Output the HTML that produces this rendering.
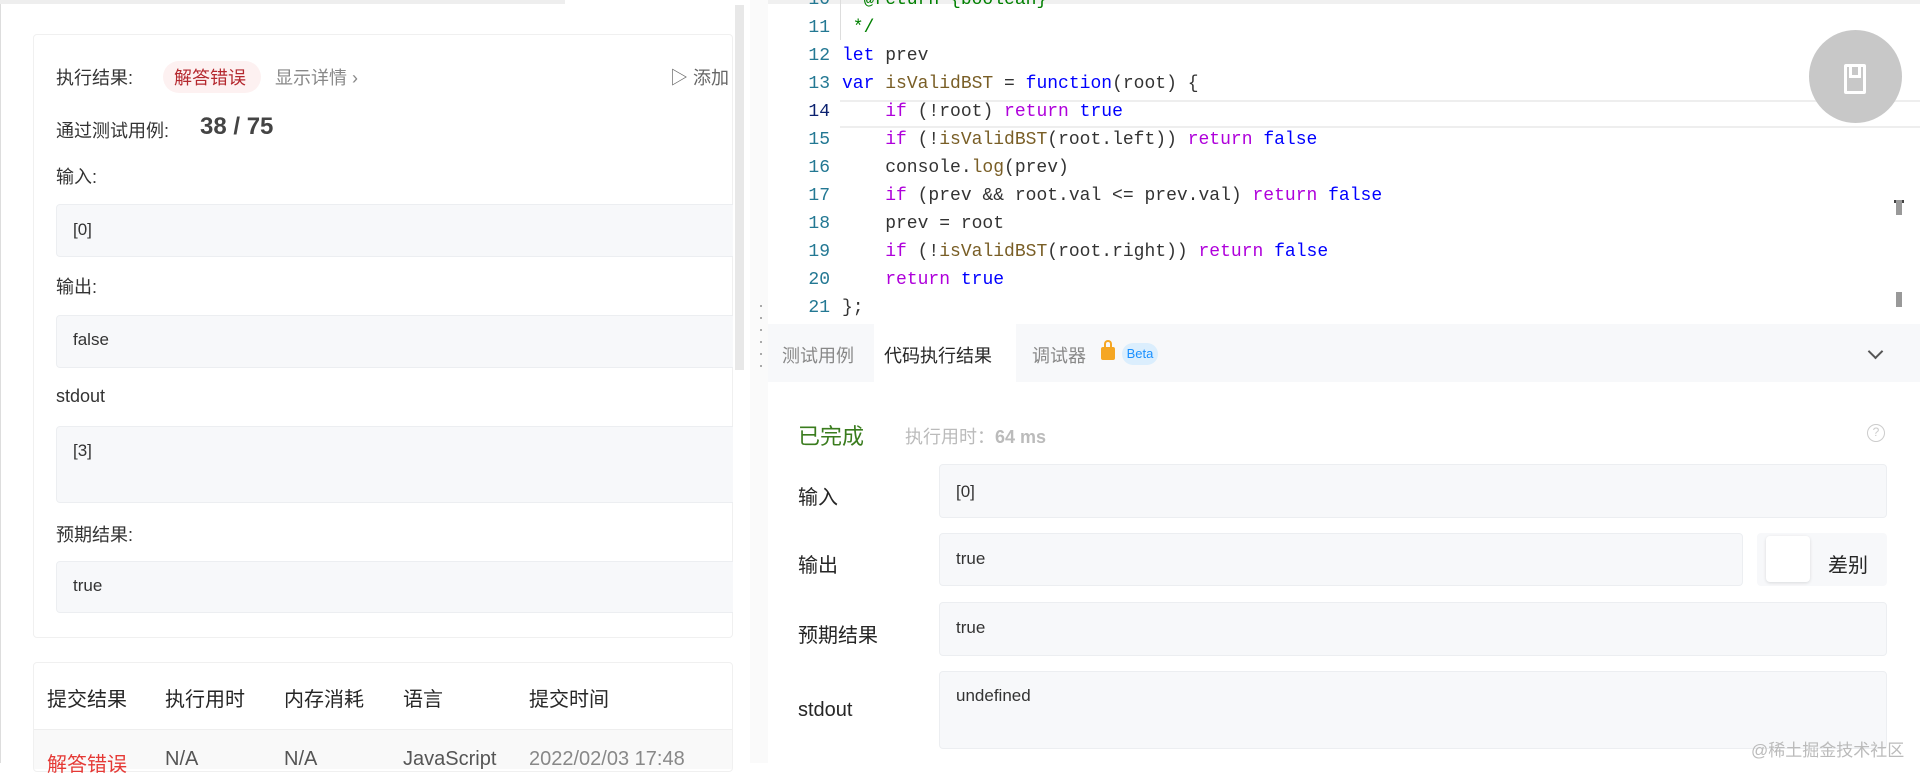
<!DOCTYPE html>
<html><head><meta charset="utf-8"><style>
*{box-sizing:border-box;margin:0;padding:0}
body{width:1920px;height:763px;overflow:hidden;background:#fff;font-family:"Liberation Sans","Noto Sans CJK SC",sans-serif;color:#333;position:relative}
.a{position:absolute;white-space:pre}
.box{position:absolute;background:#f7f8fa;border:1px solid #eceef1;border-radius:4px}
.code{font-family:"Liberation Mono","DejaVu Sans Mono",monospace;font-size:18px;color:#333}
.ln{position:absolute;left:790px;width:40px;text-align:right;color:#237893;font-family:"Liberation Mono",monospace;font-size:18px}
.k{color:#0000ff}.p{color:#af00db}.f{color:#795e26}.c{color:#008000}
</style></head><body>
<!-- left panel -->
<div class="a" style="left:0;top:0;width:1px;height:763px;background:#ddd"></div>
<div class="a" style="left:0;top:0;width:565px;height:4px;background:#eee"></div>
<div class="a" style="left:33px;top:34px;width:700px;height:604px;border:1px solid #f0f0f0;border-radius:4px"></div>
<div class="a" style="left:56px;top:64px;font-size:18px;color:#333">执行结果:</div>
<div class="a" style="left:163px;top:61px;width:98px;height:32px;border-radius:16px;background:#fdf1f1"></div>
<div class="a" style="left:174px;top:64px;font-size:18px;color:#b4282e">解答错误</div>
<div class="a" style="left:275px;top:64px;font-size:18px;color:#888">显示详情 ›</div>
<div class="a" style="left:670px;top:64px;font-size:18px;color:#666">▷ 添加</div>
<div class="a" style="left:56px;top:117px;font-size:18px">通过测试用例:</div>
<div class="a" style="left:200px;top:113px;font-size:24px;font-weight:bold;color:#444">38 / 75</div>
<div class="a" style="left:56px;top:163px;font-size:18px">输入:</div>
<div class="box" style="left:56px;top:204px;width:690px;height:53px"></div>
<div class="a" style="left:73px;top:220px;font-size:17px">[0]</div>
<div class="a" style="left:56px;top:273px;font-size:18px">输出:</div>
<div class="box" style="left:56px;top:315px;width:690px;height:53px"></div>
<div class="a" style="left:73px;top:330px;font-size:17px">false</div>
<div class="a" style="left:56px;top:386px;font-size:18px">stdout</div>
<div class="box" style="left:56px;top:426px;width:690px;height:77px"></div>
<div class="a" style="left:73px;top:441px;font-size:17px">[3]</div>
<div class="a" style="left:56px;top:521px;font-size:18px">预期结果:</div>
<div class="box" style="left:56px;top:561px;width:690px;height:52px"></div>
<div class="a" style="left:73px;top:576px;font-size:17px">true</div>
<div class="a" style="left:33px;top:662px;width:700px;height:110px;border:1px solid #f0f0f0;border-radius:4px"></div>
<div class="a" style="left:34px;top:729px;width:698px;height:40px;background:#f9f9f9;border-top:1px solid #eee"></div>
<div class="a" style="left:47px;top:683px;font-size:20px;color:#262626">提交结果</div>
<div class="a" style="left:165px;top:683px;font-size:20px;color:#262626">执行用时</div>
<div class="a" style="left:284px;top:683px;font-size:20px;color:#262626">内存消耗</div>
<div class="a" style="left:403px;top:683px;font-size:20px;color:#262626">语言</div>
<div class="a" style="left:529px;top:683px;font-size:20px;color:#262626">提交时间</div>
<div class="a" style="left:47px;top:748px;font-size:20px;color:#e53935">解答错误</div>
<div class="a" style="left:165px;top:748px;font-size:20px;color:#555">N/A</div>
<div class="a" style="left:284px;top:748px;font-size:20px;color:#555">N/A</div>
<div class="a" style="left:403px;top:748px;font-size:20px;color:#555">JavaScript</div>
<div class="a" style="left:529px;top:748px;font-size:20px;color:#888">2022/02/03 17:48</div>
<div class="a" style="left:733px;top:0;width:17px;height:763px;background:#fff"></div>
<div class="a" style="left:735px;top:5px;width:9px;height:365px;background:#e8e8e8"></div>
<!-- divider -->
<div class="a" style="left:750px;top:0;width:18px;height:763px;background:#fafafa"></div>
<div class="a" style="left:760px;top:305px;width:2px;height:70px;background:repeating-linear-gradient(#aaa 0 2px,transparent 2px 12px)"></div>
<!-- editor -->
<div class="a" style="left:768px;top:0;width:1152px;height:324px;background:#fff"></div>
<div class="a" style="left:768px;top:0;width:1152px;height:4px;background:#f0f0f0"></div>
<div class="a" style="left:840px;top:100px;width:1080px;height:28px;border-top:2px solid #eee;border-bottom:2px solid #eee"></div>
<div class="a" style="left:840px;top:0;width:1px;height:40px;background:#ddd"></div>
<div class="ln" style="top:-10px">10</div><div class="a code" style="left:842px;top:-10px;color:#008000">  @return {boolean}</div>
<div class="ln" style="top:18px">11</div><div class="a code c" style="left:842px;top:18px"> */</div>
<div class="ln" style="top:46px">12</div><div class="a code" style="left:842px;top:46px"><span class="k">let</span> prev</div>
<div class="ln" style="top:74px">13</div><div class="a code" style="left:842px;top:74px"><span class="k">var</span> <span class="f">isValidBST</span> = <span class="k">function</span>(root) {</div>
<div class="ln" style="top:102px;color:#0b216f">14</div><div class="a code" style="left:842px;top:102px">    <span class="p">if</span> (!root) <span class="p">return</span> <span class="k">true</span></div>
<div class="ln" style="top:130px">15</div><div class="a code" style="left:842px;top:130px">    <span class="p">if</span> (!<span class="f">isValidBST</span>(root.left)) <span class="p">return</span> <span class="k">false</span></div>
<div class="ln" style="top:158px">16</div><div class="a code" style="left:842px;top:158px">    console.<span class="f">log</span>(prev)</div>
<div class="ln" style="top:186px">17</div><div class="a code" style="left:842px;top:186px">    <span class="p">if</span> (prev &amp;&amp; root.val &lt;= prev.val) <span class="p">return</span> <span class="k">false</span></div>
<div class="ln" style="top:214px">18</div><div class="a code" style="left:842px;top:214px">    prev = root</div>
<div class="ln" style="top:242px">19</div><div class="a code" style="left:842px;top:242px">    <span class="p">if</span> (!<span class="f">isValidBST</span>(root.right)) <span class="p">return</span> <span class="k">false</span></div>
<div class="ln" style="top:270px">20</div><div class="a code" style="left:842px;top:270px">    <span class="p">return</span> <span class="k">true</span></div>
<div class="ln" style="top:298px">21</div><div class="a code" style="left:842px;top:298px">};</div>
<div class="a" style="left:1809px;top:30px;width:93px;height:93px;border-radius:50%;background:#c8c8c8"></div>
<div class="a" style="left:1844px;top:64px;width:22px;height:30px;border:3px solid #fff;border-radius:2px"></div>
<div class="a" style="left:1849px;top:64px;width:12px;height:14px;border:3px solid #fff;border-top:none"></div>
<div class="a" style="left:1894px;top:200px;width:10px;height:3px;background:#444"></div>
<div class="a" style="left:1896px;top:200px;width:6px;height:15px;background:#999"></div>
<div class="a" style="left:1896px;top:292px;width:6px;height:15px;background:#999"></div>
<!-- tabs -->
<div class="a" style="left:768px;top:324px;width:1152px;height:58px;background:#f7f8fa"></div>
<div class="a" style="left:874px;top:324px;width:142px;height:58px;background:#fff"></div>
<div class="a" style="left:782px;top:342px;font-size:18px;color:#888">测试用例</div>
<div class="a" style="left:884px;top:342px;font-size:18px;color:#262626">代码执行结果</div>
<div class="a" style="left:1032px;top:342px;font-size:18px;color:#888">调试器</div>
<div class="a" style="left:1101px;top:347px;width:14px;height:13px;background:#f5a623;border-radius:2px"></div>
<div class="a" style="left:1104px;top:340px;width:8px;height:9px;border:2px solid #f5a623;border-bottom:none;border-radius:4px 4px 0 0"></div>
<div class="a" style="left:1122px;top:343px;width:36px;height:22px;border-radius:11px;background:#dbeefd;color:#1a90ff;font-size:13px;text-align:center;line-height:22px">Beta</div>
<div class="a" style="left:1870px;top:346px;width:11px;height:11px;border-right:2px solid #555;border-bottom:2px solid #555;transform:rotate(45deg)"></div>
<!-- result -->
<div class="a" style="left:798px;top:419px;font-size:22px;color:#3a7c1e">已完成</div>
<div class="a" style="left:905px;top:423px;font-size:18px;color:#bbb">执行用时：<b>64 ms</b></div>
<div class="a" style="left:1867px;top:424px;width:18px;height:18px;border:1.5px solid #ccc;border-radius:50%;color:#ccc;font-size:12px;text-align:center;line-height:15px">?</div>
<div class="a" style="left:798px;top:481px;font-size:20px;color:#262626">输入</div>
<div class="box" style="left:939px;top:464px;width:948px;height:54px"></div>
<div class="a" style="left:956px;top:482px;font-size:17px">[0]</div>
<div class="a" style="left:798px;top:549px;font-size:20px;color:#262626">输出</div>
<div class="box" style="left:939px;top:533px;width:804px;height:53px"></div>
<div class="a" style="left:956px;top:549px;font-size:17px">true</div>
<div class="a" style="left:1757px;top:533px;width:130px;height:53px;background:#f7f8fa;border-radius:4px"></div>
<div class="a" style="left:1766px;top:536px;width:44px;height:46px;background:#fff;border-radius:4px;box-shadow:0 1px 3px rgba(0,0,0,.12)"></div>
<div class="a" style="left:1828px;top:549px;font-size:20px;color:#262626">差别</div>
<div class="a" style="left:798px;top:619px;font-size:20px;color:#262626">预期结果</div>
<div class="box" style="left:939px;top:602px;width:948px;height:54px"></div>
<div class="a" style="left:956px;top:618px;font-size:17px">true</div>
<div class="a" style="left:798px;top:699px;font-size:20px;color:#262626">stdout</div>
<div class="box" style="left:939px;top:671px;width:948px;height:78px"></div>
<div class="a" style="left:956px;top:686px;font-size:17px">undefined</div>
<div class="a" style="left:1751px;top:736px;font-size:17px;color:#bbb">@稀土掘金技术社区</div>
</body></html>
